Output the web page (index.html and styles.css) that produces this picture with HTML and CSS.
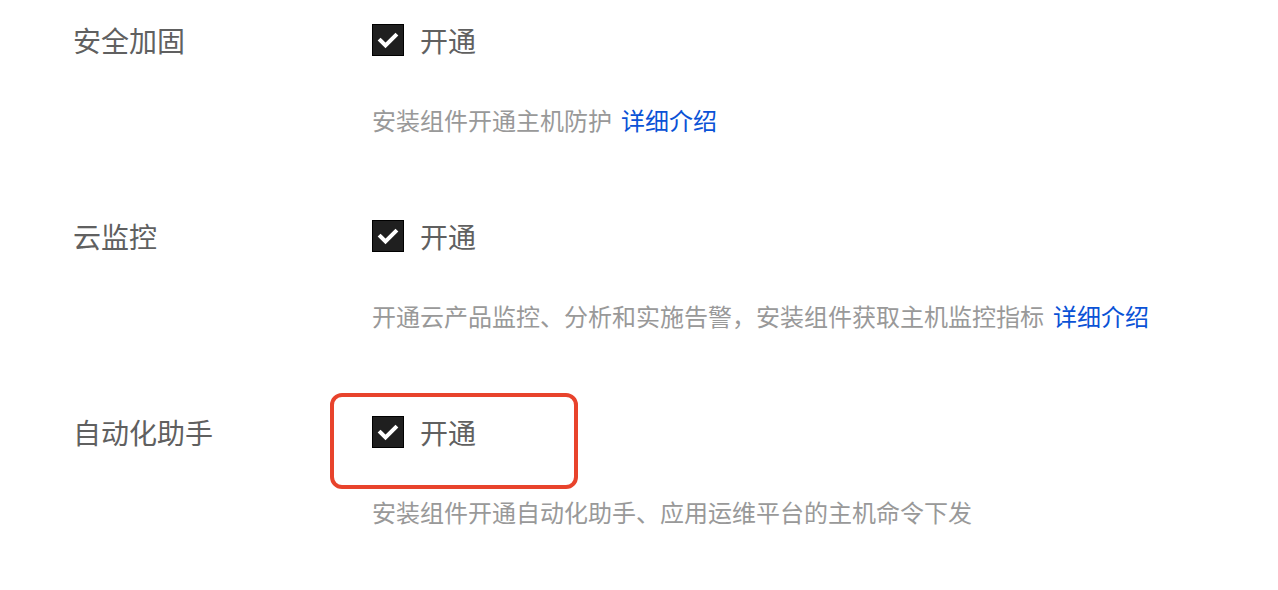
FILE: index.html
```html
<!DOCTYPE html>
<html lang="zh-CN">
<head>
  <meta charset="UTF-8" />
  <title>主机组件</title>
  <link rel="stylesheet" href="styles.css">
</head>
<body>
<div class="main-wrap">
  <!-- 安全加固 -->
  <div class="form-row">
    <div class="form-label">安全加固</div>
    <div class="form-control">
      <label class="check-line">
        <span class="check-box"><svg viewBox="0 0 32 32" width="32" height="32"><path d="M8.5 16.5l5 5 10-10" fill="none" stroke="#fff" stroke-width="4" stroke-linecap="square"/></svg></span>
        <span class="check-text">开通</span>
      </label>
      <div class="form-desc">安装组件开通主机防护<a class="desc-link" href="#">详细介绍</a></div>
    </div>
  </div>

  <!-- 云监控 -->
  <div class="form-row">
    <div class="form-label">云监控</div>
    <div class="form-control">
      <label class="check-line">
        <span class="check-box"><svg viewBox="0 0 32 32" width="32" height="32"><path d="M8.5 16.5l5 5 10-10" fill="none" stroke="#fff" stroke-width="4" stroke-linecap="square"/></svg></span>
        <span class="check-text">开通</span>
      </label>
      <div class="form-desc">开通云产品监控、分析和实施告警，安装组件获取主机监控指标<a class="desc-link" href="#">详细介绍</a></div>
    </div>
  </div>

  <!-- 自动化助手 -->
  <div class="form-row">
    <div class="form-label">自动化助手</div>
    <div class="form-control">
      <label class="check-line">
        <span class="check-box"><svg viewBox="0 0 32 32" width="32" height="32"><path d="M8.5 16.5l5 5 10-10" fill="none" stroke="#fff" stroke-width="4" stroke-linecap="square"/></svg></span>
        <span class="check-text">开通</span>
        <span class="mark-box"></span>
      </label>
      <div class="form-desc">安装组件开通自动化助手、应用运维平台的主机命令下发</div>
    </div>
  </div>
</div>
</body>
</html>
```

FILE: styles.css
```css
body, html {
  margin: 0;
  padding: 0;
  background: #fff;
  font-family: "Noto Sans CJK SC", "Noto Sans", sans-serif;
  color: #555;
}
.main-wrap {
  padding: 20px 0 0 73px;
}
.form-row {
  display: flex;
  margin-bottom: 80px;
}
.form-label {
  width: 299px;
  flex-shrink: 0;
  font-size: 28px;
  line-height: 40px;
  color: #606060;
}
.form-control {
  display: flex;
  flex-direction: column;
}
.check-line {
  position: relative;
  display: flex;
  align-items: center;
  height: 40px;
}
.check-box {
  width: 32px;
  height: 32px;
  box-sizing: border-box;
  background: #1f1f1f;
  border: 1.5px solid #000;
  display: flex;
  align-items: center;
  justify-content: center;
}
.check-box svg {
  display: block;
  flex-shrink: 0;
}
.check-text {
  margin-left: 16px;
  font-size: 28px;
  line-height: 40px;
  color: #606060;
}
.mark-box {
  position: absolute;
  left: -42px;
  top: -19px;
  width: 248px;
  height: 96px;
  box-sizing: border-box;
  border: 4px solid #e8432c;
  border-radius: 12px;
}
.form-desc {
  margin-top: 44px;
  font-size: 24px;
  line-height: 32px;
  color: #999;
}
.desc-link {
  margin-left: 9px;
  color: #0a52d6;
  text-decoration: none;
}
```
